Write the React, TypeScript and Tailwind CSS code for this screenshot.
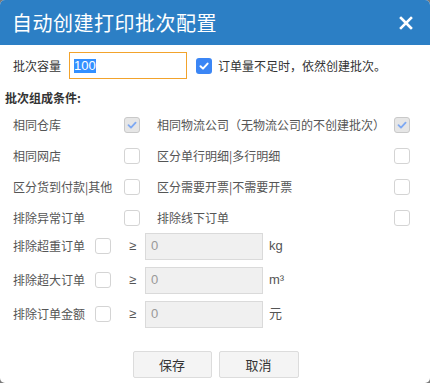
import React from 'react';

const font = { fontFamily: '"Noto Sans CJK SC", "Liberation Sans", sans-serif' };
const latin = { fontFamily: '"Liberation Sans", "Noto Sans CJK SC", sans-serif' };

function Box({ checked = false, disabled = false }: { checked?: boolean; disabled?: boolean }) {
  if (checked && !disabled) {
    return (
      <span className="flex h-4 w-4 shrink-0 items-center justify-center rounded-[3px] bg-[#3b86f5]">
        <svg viewBox="0 0 12 12" className="h-3 w-3" fill="none" stroke="white" strokeWidth="2" strokeLinecap="round" strokeLinejoin="round">
          <path d="M2.5 6.2 5 8.6 9.6 3.6" />
        </svg>
      </span>
    );
  }
  return (
    <span
      className={
        'flex h-4 w-4 shrink-0 items-center justify-center rounded-[3px] border ' +
        (disabled ? 'border-[#c9c9c9] bg-[#e6e6e6]' : 'border-[#d4d4d4] bg-white')
      }
    >
      {checked && (
        <svg viewBox="0 0 12 12" className="h-3 w-3" fill="none" stroke="#7fa9f2" strokeWidth="1.8" strokeLinecap="round" strokeLinejoin="round">
          <path d="M2.5 6.2 5 8.6 9.6 3.6" />
        </svg>
      )}
    </span>
  );
}

const conditions = [
  ['相同仓库', true, '相同物流公司（无物流公司的不创建批次）', true],
  ['相同网店', false, '区分单行明细|多行明细', false],
  ['区分货到付款|其他', false, '区分需要开票|不需要开票', false],
  ['排除异常订单', false, '排除线下订单', false],
] as const;

const limits = [
  { name: '排除超重订单', unit: 'kg' },
  { name: '排除超大订单', unit: 'm³' },
  { name: '排除订单金额', unit: '元' },
];

export default function App() {
  return (
    <div className="h-[383px] w-[430px] bg-[#7a7a7a]" style={font}>
      <div className="flex h-full flex-col overflow-hidden rounded-[5px] bg-white">
        <div className="flex h-[45px] shrink-0 items-center justify-between bg-[#2c7fc5] pl-3 pr-[17px]">
          <span className="text-[20px] leading-none tracking-[0.5px] text-white">自动创建打印批次配置</span>
          <svg viewBox="0 0 14 14" className="h-[14px] w-[14px]" fill="none" stroke="white" strokeWidth="2.6" strokeLinecap="square">
            <path d="M2 2 12 12M12 2 2 12" />
          </svg>
        </div>

        <div className="mt-[7px] flex h-[27px] items-center pl-[13px] text-[12px] text-[#333]">
          <span className="w-[56px]">批次容量</span>
          <div className="flex h-[27px] w-[118px] items-center border border-[#f2a32c] px-[4px]">
            <span className="bg-[#3390ff] text-[13px] leading-[14px] text-white" style={latin}>100</span>
          </div>
          <div className="ml-[9px]">
            <Box checked />
          </div>
          <span className="ml-[6px]">订单量不足时，依然创建批次。</span>
        </div>

        <div className="mt-[11px] h-4 pl-[5px] text-[12px] font-bold leading-4 text-[#333]">批次组成条件:</div>

        <div className="mt-[3px] flex flex-col pl-[13px] pr-[20px] text-[12px] text-[#555]">
          {conditions.map(([a, ac, b, bc]) => (
            <div key={a} className="flex h-[31px] items-center">
              <span className="w-[111px]">{a}</span>
              <Box checked={ac} disabled={ac} />
              <span className="ml-[17px] flex-1">{b}</span>
              <Box checked={bc} disabled={bc} />
            </div>
          ))}
        </div>

        <div className="-mt-[4px] flex flex-col pl-[13px] text-[12px] text-[#555]">
          {limits.map((l) => (
            <div key={l.name} className="flex h-[34px] items-center">
              <span className="w-[82px]">{l.name}</span>
              <Box />
              <span className="ml-[18px] w-[16px] text-[13px]" style={latin}>≥</span>
              <div className="flex h-[27px] w-[118px] items-center border border-[#dadada] bg-[#f0f0f0] px-[5px] text-[13px] text-[#999]" style={latin}>
                0
              </div>
              <span className="ml-[6px] text-[13px]" style={latin}>{l.unit}</span>
            </div>
          ))}
        </div>

        <div className="mt-[20px] flex justify-center gap-[7px] pl-[1px] text-[13px] text-[#333]">
          <button className="h-[27px] w-[79px] rounded-[2px] border border-[#dcdcdc] bg-[#f4f4f4]">保存</button>
          <button className="h-[27px] w-[80px] rounded-[2px] border border-[#dcdcdc] bg-[#f4f4f4]">取消</button>
        </div>
      </div>
    </div>
  );
}
